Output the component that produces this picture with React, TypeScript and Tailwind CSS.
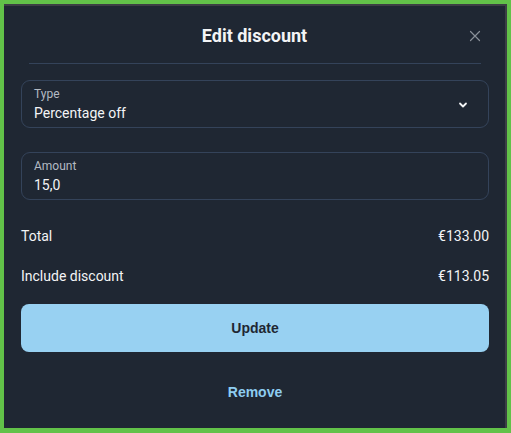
import { FC } from 'react';

const Field: FC<{ label: string; value: string; chevron?: boolean }> = ({ label, value, chevron }) => (
  <div className="flex h-[48px] items-center justify-between rounded-[9px] border border-[#34435a] pl-[12px] pr-[20px]">
    <div className="flex flex-col">
      <span className="text-[12px] leading-[14px] text-[#b4bac3]">{label}</span>
      <span className="mt-[3px] text-[14px] leading-[18px] text-[#f3f4f6]">{value}</span>
    </div>
    {chevron && (
      <svg width="10" height="10" viewBox="0 0 10 10" className="mt-[1px]">
        <path d="M2 3.5 L5 6.5 L8 3.5" fill="none" stroke="#f3f4f6" strokeWidth="1.8" strokeLinecap="round" strokeLinejoin="round" />
      </svg>
    )}
  </div>
);

const Row: FC<{ label: string; value: string }> = ({ label, value }) => (
  <div className="flex items-center justify-between text-[14px] leading-[20px] text-[#f3f4f6]">
    <span>{label}</span>
    <span>{value}</span>
  </div>
);

const App: FC = () => {
  return (
    <div className="h-[433px] w-[511px] bg-[#62c249] pb-[5px] pl-[4px] pr-[4px] pt-[4px]" style={{ fontFamily: 'Roboto, sans-serif' }}>
      <div className="flex h-full flex-col border-r-2 border-t-2 border-[#3c3f44] bg-[#1f2733]">
        <div className="relative pt-[19px] text-center">
          <h2 className="text-[18px] font-bold leading-[22px] text-[#f3f4f6]">Edit discount</h2>
          <svg width="12" height="12" viewBox="0 0 12 12" className="absolute right-[24px] top-[24px]">
            <path d="M1.5 1.5 L10.5 10.5 M10.5 1.5 L1.5 10.5" stroke="#8a9099" strokeWidth="1.2" strokeLinecap="round" />
          </svg>
        </div>
        <div className="ml-[25px] mr-[24px] mt-[16px] h-px bg-[#34435a]" />
        <div className="flex flex-col pl-[17px] pr-[16px] pt-[16px]">
          <Field label="Type" value="Percentage off" chevron />
          <div className="mt-[24px]">
            <Field label="Amount" value="15,0" />
          </div>
          <div className="mt-[26px]">
            <Row label="Total" value="€133.00" />
          </div>
          <div className="mt-[20px]">
            <Row label="Include discount" value="€113.05" />
          </div>
          <button
            className="mt-[18px] h-[48px] w-full rounded-[8px] bg-[#98d1f2] text-[14px] font-bold text-[#1f2733]"
            style={{ fontFamily: '"Liberation Sans", Arial, sans-serif' }}
          >
            Update
          </button>
          <button
            className="mt-[30px] h-[20px] w-full text-[14px] font-bold leading-[20px] text-[#8ecdf1]"
            style={{ fontFamily: '"Liberation Sans", Arial, sans-serif' }}
          >
            Remove
          </button>
        </div>
      </div>
    </div>
  );
};

export default App;
